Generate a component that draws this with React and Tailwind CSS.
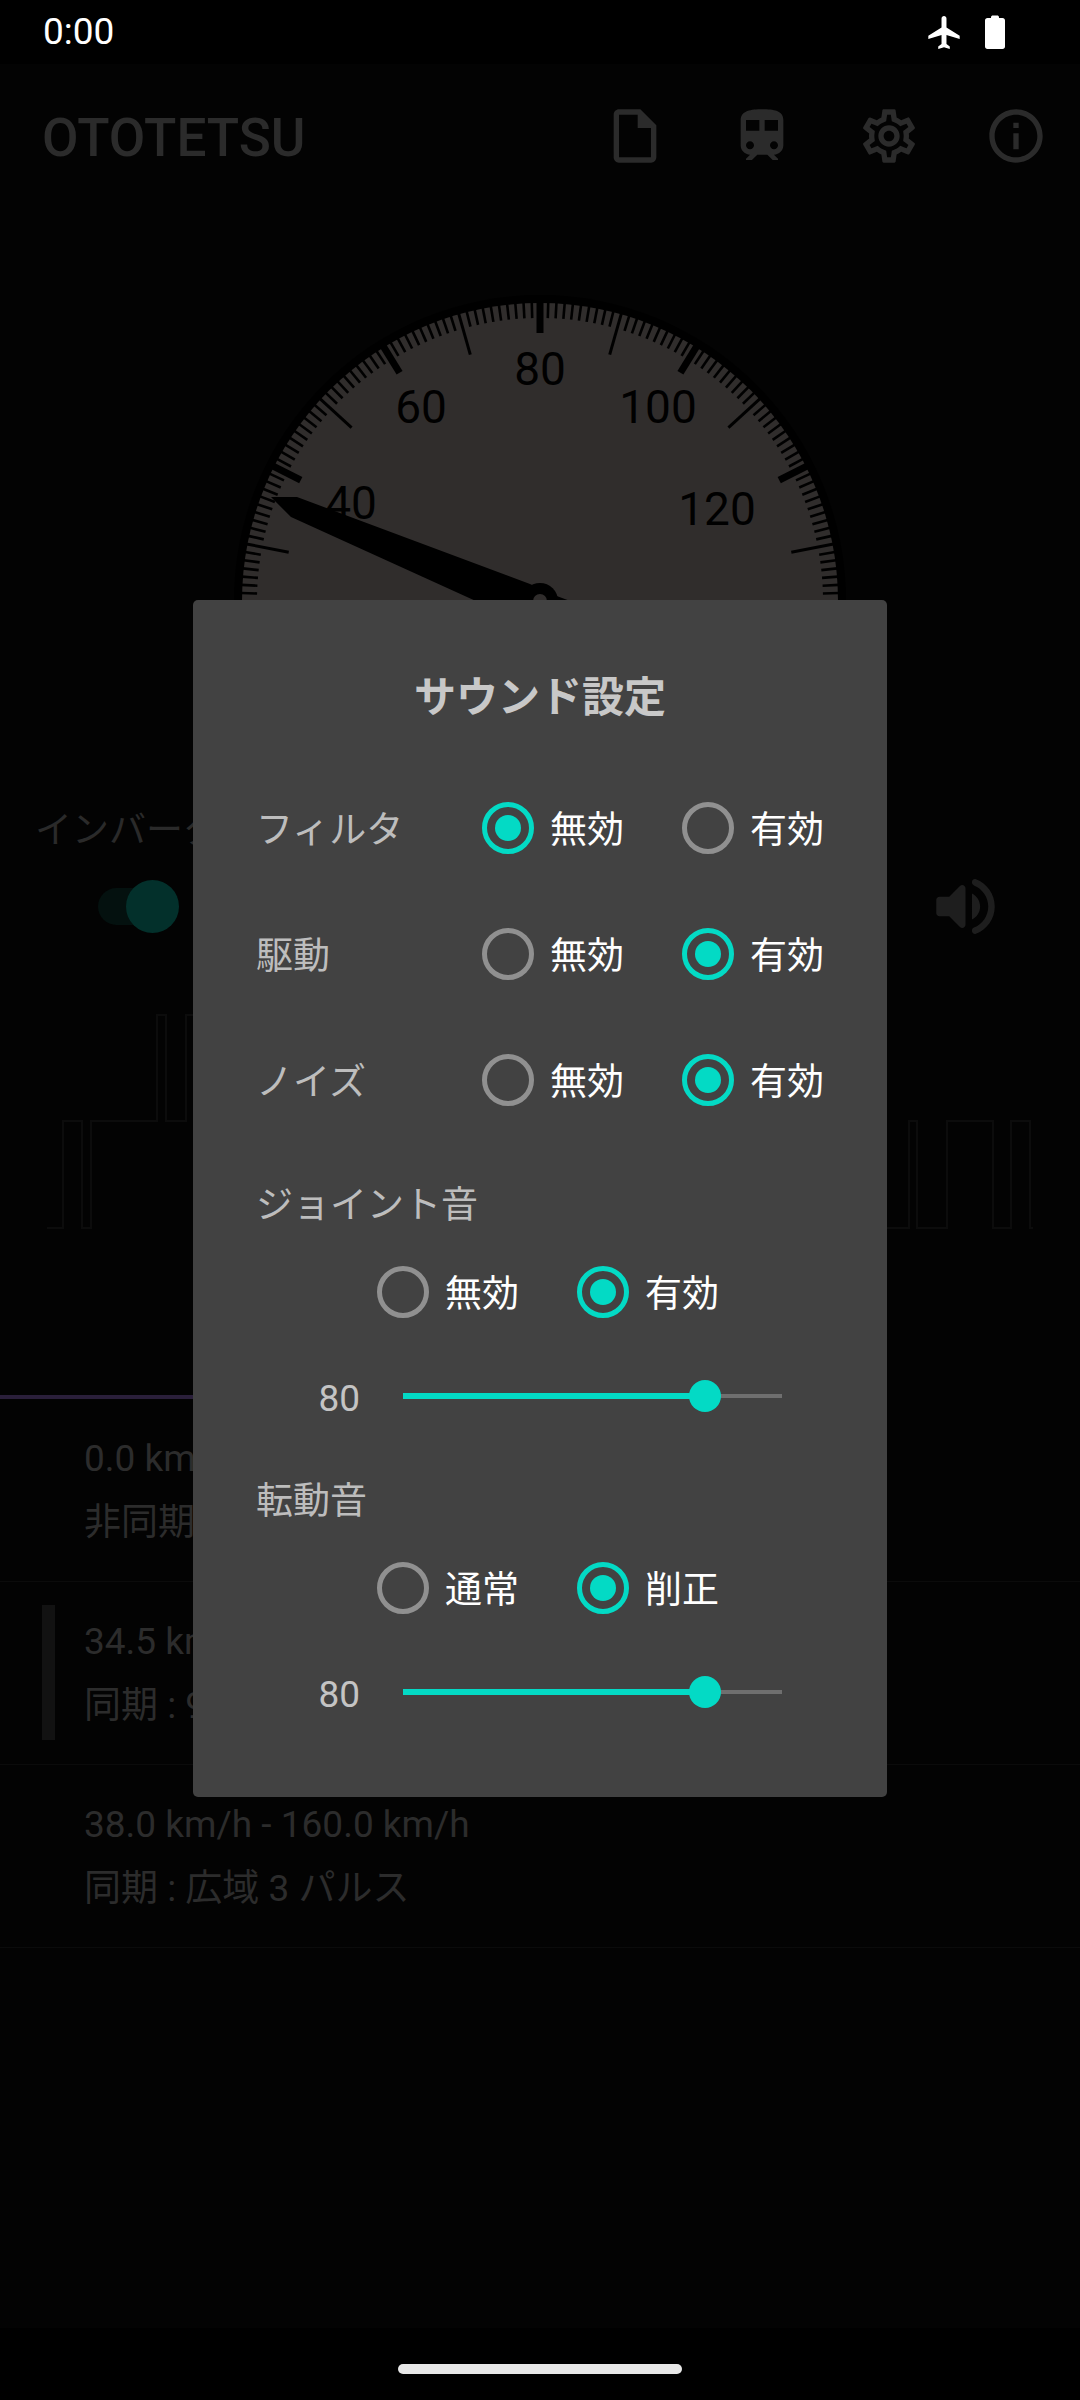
import { MdInfoOutline, MdOutlineInsertDriveFile, MdOutlineSettings, MdTrain } from "react-icons/md";

const speedLabels = [
  { text: "20", x: 324, y: 618 },
  { text: "40", x: 351, y: 502 },
  { text: "60", x: 421, y: 406 },
  { text: "80", x: 540, y: 368 },
  { text: "100", x: 658, y: 406 },
  { text: "120", x: 717, y: 508 },
  { text: "140", x: 745, y: 618 },
];

const ticks = Array.from({ length: 161 }, (_, speed) => speed);

const rows = [
  { label: "フィルタ", selected: 0 },
  { label: "駆動", selected: 1 },
  { label: "ノイズ", selected: 1 },
];

const patterns = [
  { range: "0.0 km/h - 34.5 km/h", mode: "非同期 : 可変" },
  { range: "34.5 km/h - 38.0 km/h", mode: "同期 : 9 パルス", current: true },
  { range: "38.0 km/h - 160.0 km/h", mode: "同期 : 広域 3 パルス" },
];

function Gauge() {
  return (
    <svg viewBox="0 208 1080 592" className="block h-[592px] w-[1080px] shrink-0">
      <circle cx="540" cy="601" r="306" fill="#000000" />
      <circle cx="540" cy="601" r="298" fill="#302d2c" />
      {ticks.map((speed) => {
        const major = speed % 20 === 0;
        const mid = speed % 10 === 0;
        const inner = major ? 268 : mid ? 256 : 283;
        return (
          <line
            key={speed}
            x1="540"
            x2="540"
            y1={601 - 299}
            y2={601 - inner}
            stroke="#000000"
            strokeWidth={major ? 7 : mid ? 3 : 2.6}
            transform={`rotate(${(speed - 80) * 1.58} 540 601)`}
          />
        );
      })}
      {speedLabels.map((label) => (
        <text key={label.text} x={label.x} y={label.y + 17} textAnchor="middle" fontSize="46" fontFamily="Roboto, sans-serif" fill="#000000">
          {label.text}
        </text>
      ))}
      <polygon points="271,497 297,497 530,584 554,595 600,612 500,612 291,517" fill="#000000" />
      <circle cx="540" cy="601" r="18" fill="#000000" />
      <circle cx="540" cy="601" r="7" fill="#302d2c" />
    </svg>
  );
}

function Waveform() {
  return (
    <svg viewBox="0 956 1080 439" className="block h-[439px] w-[1080px] shrink-0" fill="none" stroke="#0c0c0c" strokeWidth="2">
      <polyline points="47,1228 63,1228 63,1121 82,1121 82,1228 91,1228 91,1121 157,1121 157,1015 166,1015 166,1121 186,1121 186,1015 200,1015" />
      <polyline points="880,1228 909,1228 909,1121 917,1121 917,1228 947,1228 947,1121 993,1121 993,1228 1011,1228 1011,1121 1030,1121 1030,1228 1033,1228" />
    </svg>
  );
}

function Radio({ checked }) {
  return (
    <span className={`flex h-[52px] w-[52px] shrink-0 items-center justify-center rounded-full border-[5.5px] ${checked ? "border-[#03dac5]" : "border-[#909090]"}`}>
      {checked && <span className="h-[26px] w-[26px] rounded-full bg-[#03dac5]" />}
    </span>
  );
}

function Option({ text, checked }) {
  return (
    <div className="flex w-[140px] shrink-0 items-center gap-[16px]">
      <Radio checked={checked} />
      <span className="shrink-0 pt-[6px] text-[37px] leading-[52px] text-white">{text}</span>
    </div>
  );
}

function VolumeSlider() {
  return (
    <div className="flex h-[82px] items-center">
      <span className="w-[104px] pt-[6px] text-right text-[37px] leading-[52px] text-[#c4c4c4]">80</span>
      <div className="relative ml-[43px] flex h-[6px] w-[379px] items-center">
        <div className="h-[6px] w-[302px] bg-[#03dac5]" />
        <div className="h-[4px] flex-1 bg-[#6f6f6f]" />
        <div className="absolute left-[286px] top-[-13px] h-[32px] w-[32px] rounded-full bg-[#03dac5]" />
      </div>
    </div>
  );
}

function SoundDialog() {
  return (
    <div className="absolute left-[193px] top-[600px] flex h-[1197px] w-[694px] flex-col rounded-[5px] bg-[#424242] px-[63px] pt-[73px]">
      <h2 className="text-center text-[42px] font-bold leading-[50px] text-[#c8c8c8]">サウンド設定</h2>
      <div className="mt-[42px]">
        {rows.map((row) => (
          <div key={row.label} className="flex h-[126px] items-center">
            <span className="w-[226px] shrink-0 pt-[6px] text-[37px] leading-[52px] text-[#bdbdbd]">{row.label}</span>
            <div className="flex gap-[60px]">
              <Option text="無効" checked={row.selected === 0} />
              <Option text="有効" checked={row.selected === 1} />
            </div>
          </div>
        ))}
      </div>
      <div className="mt-[38px] text-[37px] leading-[50px] text-[#bdbdbd]">ジョイント音</div>
      <div className="-mt-[2px] flex h-[126px] items-center gap-[60px] pl-[121px]">
        <Option text="無効" />
        <Option text="有効" checked />
      </div>
      <VolumeSlider />
      <div className="mt-[40px] text-[37px] leading-[50px] text-[#bdbdbd]">転動音</div>
      <div className="-mt-[2px] flex h-[126px] items-center gap-[60px] pl-[121px]">
        <Option text="通常" />
        <Option text="削正" checked />
      </div>
      <VolumeSlider />
    </div>
  );
}

export default function App() {
  return (
    <div className="relative flex h-[2400px] w-[1080px] flex-col overflow-hidden bg-[#030303] font-[Roboto,'Noto_Sans_CJK_JP',sans-serif]">
      <div className="flex h-[64px] shrink-0 items-center justify-between bg-black pl-[43px] pr-[75px] text-white">
        <span className="text-[37px] leading-[60px]">0:00</span>
        <div className="flex items-center gap-[25px]">
          <svg viewBox="2 2 19 20" className="h-[33px] w-[32px]" fill="currentColor">
            <path d="M21 16v-2l-8-5V3.5c0-.83-.67-1.5-1.5-1.5S10 2.67 10 3.5V9l-8 5v2l8-2.5V19l-2 1.5V22l3.5-1 3.5 1v-1.5L13 19v-5.5l8 2.5z" />
          </svg>
          <svg viewBox="0 0 20 34" className="h-[34px] w-[20px]" fill="currentColor">
            <path d="M6 2.5C6 1 6.800 .5 8 .5h4c1.200 0 2 .5 2 2V3h3.500C19 3 20 4 20 5.500V31.500C20 33 19 34 17.500 34h-15C1 34 0 33 0 31.500V5.500C0 4 1 3 2.500 3H6z" />
          </svg>
        </div>
      </div>

      <header className="flex h-[144px] shrink-0 items-center pl-[42px] pr-[32px] text-[#2b2b2b]">
        <h1 className="mr-auto pt-[4px] text-[53px] font-medium leading-none">OTOTETSU</h1>
        <div className="flex items-center gap-[63px]">
          <MdOutlineInsertDriveFile size={64} />
          <MdTrain size={64} />
          <MdOutlineSettings size={64} />
          <MdInfoOutline size={64} />
        </div>
      </header>

      <Gauge />

      <div className="flex h-[156px] shrink-0 items-start justify-between pl-[35px] pr-[85px]">
        <div className="flex flex-col">
          <span className="pt-[3px] text-[37px] leading-[56px] text-[#2a2a2a]">インバータ</span>
          <div className="relative ml-[63px] mt-[29px] h-[37px] w-[72px] rounded-full bg-[#04110f]">
            <div className="absolute left-[28px] top-[-8px] h-[53px] w-[53px] rounded-full bg-[#03302b]" />
          </div>
        </div>
        <svg viewBox="3 3.230 18 17.540" className="mt-[78px] h-[57px] w-[59px]" fill="#1e1e1e">
          <path d="M3 10v4c0 .55.45 1 1 1h3l3.290 3.290c.63.63 1.710.18 1.710-.71V6.410c0-.89-1.080-1.340-1.710-.71L7 9H4c-.55 0-1 .45-1 1zm13.500 2c0-1.770-1.020-3.290-2.500-4.030v8.050c1.480-.73 2.500-2.250 2.500-4.020zM14 4.450v.2c0 .38.25.71.6.85C17.180 6.530 19 9.060 19 12s-1.820 5.470-4.400 6.500c-.36.14-.6.47-.6.85v.2c0 .63.63 1.070 1.210.85C18.600 19.110 21 15.840 21 12s-2.400-7.110-5.790-8.400c-.58-.23-1.210.22-1.210.85z" />
        </svg>
      </div>

      <Waveform />

      <div className="h-[4px] w-[420px] shrink-0 bg-[#2a1f3a]" />

      <div className="shrink-0">
        {patterns.map((pattern) => (
          <div key={pattern.range} className="relative border-b border-[#0b0b0b] pb-[26px] pl-[84px] pt-[28px] text-[37px] leading-[64px] text-[#2c2c2c]">
            {pattern.current && <div className="absolute left-[42px] top-[23px] h-[135px] w-[13px] bg-[#121212]" />}
            <div>{pattern.range}</div>
            <div>{pattern.mode}</div>
          </div>
        ))}
      </div>

      <div className="mt-auto flex h-[72px] shrink-0 justify-center bg-black pt-[36px]">
        <div className="h-[10px] w-[284px] rounded-full bg-[#e8e8e8]" />
      </div>

      <SoundDialog />
    </div>
  );
}
